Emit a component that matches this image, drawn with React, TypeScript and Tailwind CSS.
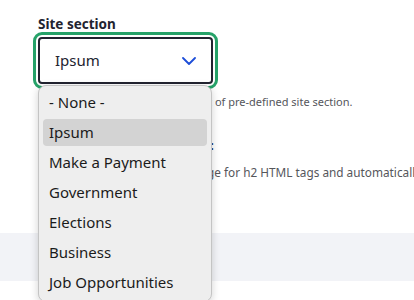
import { FC } from "react";

const options = [
  "- None -",
  "Ipsum",
  "Make a Payment",
  "Government",
  "Elections",
  "Business",
  "Job Opportunities",
];

const App: FC = () => {
  return (
    <div className="relative h-[300px] w-[414px] overflow-hidden bg-white font-['Noto_Sans',sans-serif] text-[#222330]">
      <div className="pl-[38px] pt-[14px]">
        <div className="text-[13.5px] font-bold leading-[20px]">Site section</div>
        <div className="mt-[3px] flex h-[47px] w-[175px] items-center justify-between rounded-[4px] border-2 border-[#222330] px-[15px] outline-[3px] outline-offset-[2px] outline-[#26a269] outline-solid">
          <span className="text-[15px]">Ipsum</span>
          <svg width="14" height="8" viewBox="0 0 14 8" fill="none">
            <path d="M1 1l6 6 6-6" stroke="#1d4ed8" strokeWidth="1.8" strokeLinecap="round" strokeLinejoin="round" />
          </svg>
        </div>
        <p className="mt-[9px] whitespace-nowrap text-[11px] leading-[18px] text-[#55565b]">
          Choose a site section from the list of pre-defined site section.
        </p>
        <div className="mt-[26px] whitespace-nowrap text-[12.5px] font-bold leading-[18px] text-[#232b55]">
          Heading background image:
        </div>
        <p className="mt-[8px] whitespace-nowrap text-[11.8px] leading-[18px] text-[#55565b]">
          Set a heading background image for h2 HTML tags and automatically apply it.
        </p>
      </div>
      <div className="mt-[52px] h-[48px] w-full bg-[#f2f3f7]" />

      <div className="absolute left-[38px] top-[85px] w-[174px] rounded-[8px] border border-[#c4c4c4] bg-[#eeeeee] px-[4px] pt-[3px] pb-[2px] shadow-[0_2px_8px_rgba(0,0,0,0.18)]">
        {options.map((o) => (
          <div
            key={o}
            className={
              "mb-[3px] flex h-[27px] items-center rounded-[4px] px-[6px] text-[15px] text-[#1b1b1b] " +
              (o === "Ipsum" ? "bg-[#d3d3d3]" : "")
            }
          >
            {o}
          </div>
        ))}
      </div>
    </div>
  );
};

export default App;
